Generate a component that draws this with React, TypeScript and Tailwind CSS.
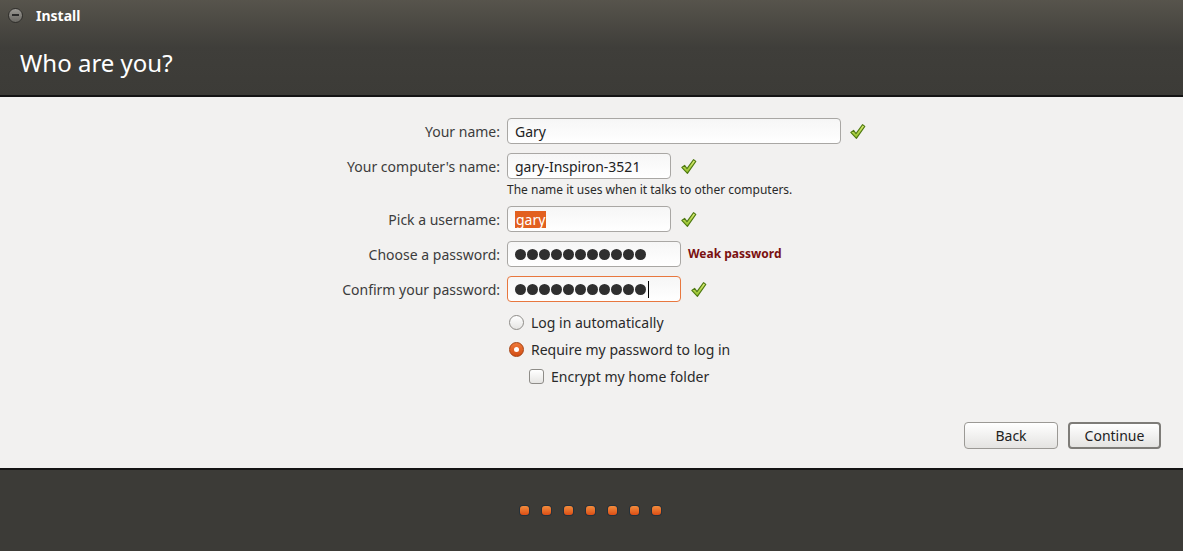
import React from "react";

const FONT = { fontFamily: '"Noto Sans", "Open Sans", sans-serif' };

function Check() {
  return (
    <svg width="17" height="17" viewBox="0 0 17 17" className="shrink-0">
      <defs>
        <linearGradient id="chk" x1="0" y1="0" x2="0" y2="1">
          <stop offset="0" stopColor="#e4f27a" />
          <stop offset="1" stopColor="#8cbc26" />
        </linearGradient>
      </defs>
      <path
        d="M1.8 9.4 L4.6 7.4 L7 10.6 L13.6 1.6 L15.8 3.4 L7.4 15.4 Z"
        fill="url(#chk)"
        stroke="#4f7a12"
        strokeWidth="1.1"
        strokeLinejoin="round"
      />
    </svg>
  );
}

function Dots({ cursor }: { cursor?: boolean }) {
  return (
    <div className="flex items-center gap-[1px]">
      {Array.from({ length: 11 }).map((_, i) => (
        <span key={i} className="w-[11px] h-[11px] rounded-full bg-[#2f2f2f] block" />
      ))}
      {cursor && <span className="ml-[1px] w-[1px] h-[17px] bg-black block" />}
    </div>
  );
}

function Row({ label, children }: { label: string; children: React.ReactNode }) {
  return (
    <div className="flex items-center h-[26px]">
      <div className="w-[500px] text-right text-[14px] text-[#3c3c3c]">{label}</div>
      <div className="ml-[7px] flex items-center">{children}</div>
    </div>
  );
}

function Field({ w, orange, children }: { w: string; orange?: boolean; children: React.ReactNode }) {
  return (
    <div
      className={`${w} h-[26px] rounded-[4px] border bg-gradient-to-b from-[#f6f6f6] to-white flex items-center pl-[7px] text-[14px] text-[#222] ${
        orange ? "border-[#e8773e]" : "border-[#a9a7a4]"
      }`}
    >
      {children}
    </div>
  );
}

export default function App() {
  return (
    <div className="w-[1183px] h-[551px] flex flex-col overflow-hidden bg-[#f2f1f0]" style={FONT}>
      {/* header */}
      <div className="h-[97px] bg-gradient-to-b from-[#57544c] via-[#3f3e3a] to-[#3c3b37] border-b-2 border-[#141414] flex flex-col">
        <div className="h-[30px] flex items-center pl-[8px] gap-[13px]">
          <div className="w-[15px] h-[15px] rounded-full bg-gradient-to-b from-[#9a9893] to-[#6a6863] border border-[#2f2e2b] flex items-center justify-center">
            <span className="w-[7px] h-[2px] bg-[#2a2a2a] block" />
          </div>
          <span className="text-white font-bold text-[14px]">Install</span>
        </div>
        <div className="pl-[20px] pt-[18px] text-white text-[24px] leading-[30px]">Who are you?</div>
      </div>

      {/* content */}
      <div className="flex-1 flex flex-col pt-[21px]">
        <div className="flex flex-col gap-[9px]">
          <Row label="Your name:">
            <Field w="w-[334px]">Gary</Field>
            <span className="ml-[8px]"><Check /></span>
          </Row>
          <div className="flex flex-col">
            <Row label="Your computer's name:">
              <Field w="w-[164px]">gary-Inspiron-3521</Field>
              <span className="ml-[9px]"><Check /></span>
            </Row>
            <div className="pl-[507px] pt-[4px] text-[12px] text-[#2a2a2a] leading-[14px]">
              The name it uses when it talks to other computers.
            </div>
          </div>
          <Row label="Pick a username:">
            <Field w="w-[164px]">
              <span className="bg-[#e2601f] text-white px-[1px] leading-[17px]">gary</span>
            </Field>
            <span className="ml-[9px]"><Check /></span>
          </Row>
          <Row label="Choose a password:">
            <Field w="w-[174px]">
              <Dots />
            </Field>
            <span className="ml-[7px] text-[12px] font-bold text-[#7a1010]">Weak password</span>
          </Row>
          <Row label="Confirm your password:">
            <Field w="w-[174px]" orange>
              <Dots cursor />
            </Field>
            <span className="ml-[9px]"><Check /></span>
          </Row>
        </div>

        <div className="pl-[509px] pt-[7px] flex flex-col text-[14px] text-[#2a2a2a]">
          <div className="h-[27px] flex items-center gap-[7px]">
            <span className="w-[15px] h-[15px] rounded-full border border-[#8e8c88] bg-gradient-to-b from-white to-[#e6e5e3] block" />
            Log in automatically
          </div>
          <div className="h-[27px] flex items-center gap-[7px]">
            <span className="w-[15px] h-[15px] rounded-full border border-[#a5400f] bg-gradient-to-b from-[#f07a3a] to-[#d24d12] flex items-center justify-center">
              <span className="w-[5px] h-[5px] rounded-full bg-white block" />
            </span>
            Require my password to log in
          </div>
          <div className="h-[27px] flex items-center gap-[7px] pl-[20px]">
            <span className="w-[15px] h-[15px] rounded-[3px] border border-[#8e8c88] bg-gradient-to-b from-white to-[#e6e5e3] block" />
            Encrypt my home folder
          </div>
        </div>

        <div className="flex justify-end gap-[10px] pr-[22px] mt-[32px]">
          <button className="w-[94px] h-[27px] rounded-[4px] border border-[#9b9995] bg-gradient-to-b from-white to-[#e4e3e1] text-[14px] text-[#222]">
            Back
          </button>
          <button className="w-[93px] h-[27px] rounded-[4px] border-2 border-[#7e7c78] bg-gradient-to-b from-white to-[#e4e3e1] text-[14px] text-[#222]">
            Continue
          </button>
        </div>
      </div>

      {/* footer */}
      <div className="h-[83px] bg-[#3c3b37] border-t-2 border-[#141414] flex items-center pl-[520px] gap-[13px]">
        {Array.from({ length: 7 }).map((_, i) => (
          <span
            key={i}
            className="w-[9px] h-[9px] rounded-[3px] bg-gradient-to-b from-[#f28c3c] to-[#dc4d14] ring-1 ring-[#25313a] block"
          />
        ))}
      </div>
    </div>
  );
}
